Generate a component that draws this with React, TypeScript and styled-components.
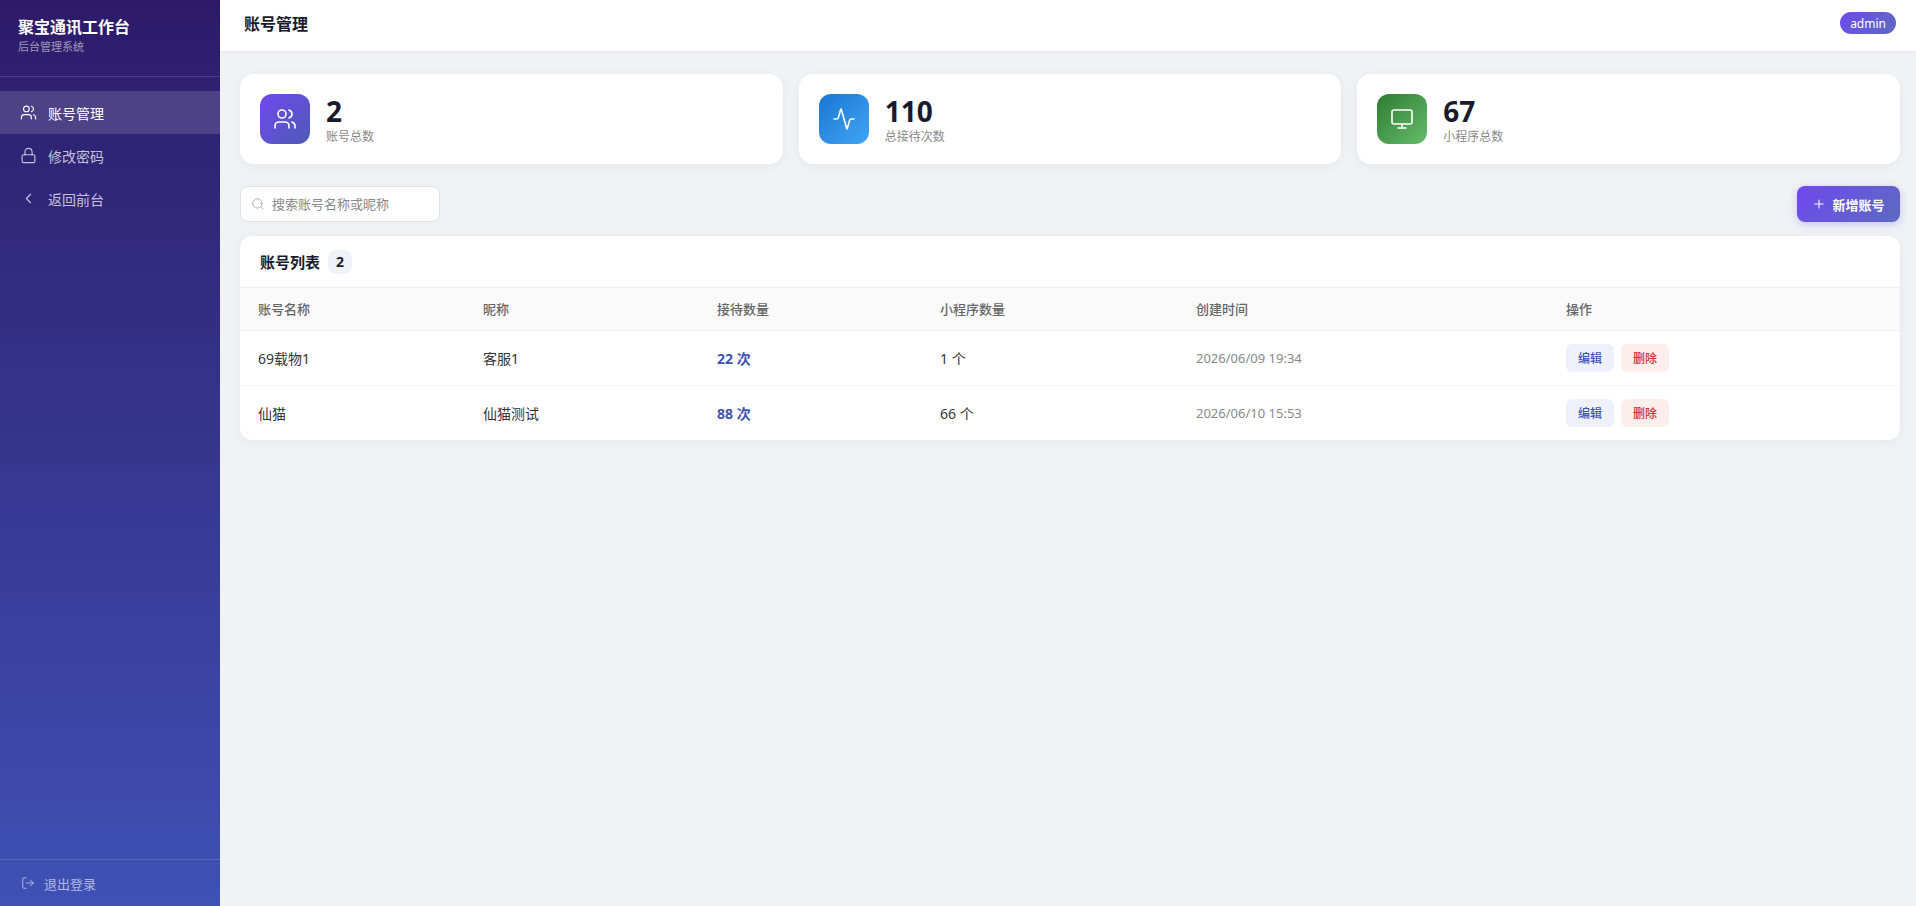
import React from 'react';
import styled, { createGlobalStyle } from 'styled-components';
import { Activity, ChevronLeft, Lock, LogOut, Monitor, Plus, Search, Users } from 'lucide-react';

const GlobalStyle = createGlobalStyle`
  html, body {
    margin: 0;
    padding: 0;
    background: #f0f2f5;
    font-family: "Noto Sans", "Noto Sans CJK SC", sans-serif;
    color: #1a1a2e;
  }
  * { box-sizing: border-box; }
`;

const Layout = styled.div`
  display: flex;
  height: 906px;
  overflow: hidden;
`;

const Sidebar = styled.aside`
  width: 220px;
  flex-shrink: 0;
  display: flex;
  flex-direction: column;
  background: linear-gradient(180deg, #2d1b69 0%, #3f51b5 100%);
`;

const Brand = styled.div`
  height: 77px;
  padding: 17px 18px 0;
  border-bottom: 1px solid rgba(255, 255, 255, 0.12);
`;

const BrandTitle = styled.div`
  font-size: 16px;
  line-height: 20px;
  font-weight: 700;
  color: #fff;
`;

const BrandSub = styled.div`
  font-size: 11px;
  line-height: 16px;
  margin-top: 2px;
  color: rgba(255, 255, 255, 0.55);
`;

const Menu = styled.nav`
  flex: 1;
  padding-top: 14px;
`;

const MenuItem = styled.a<{ $active?: boolean }>`
  display: flex;
  align-items: center;
  gap: 11px;
  height: 43px;
  padding-left: 20px;
  font-size: 14px;
  color: ${({ $active }) => ($active ? '#fff' : 'rgba(255, 255, 255, 0.72)')};
  background: ${({ $active }) => ($active ? 'rgba(255, 255, 255, 0.15)' : 'transparent')};
  cursor: pointer;
`;

const SidebarFooter = styled.div`
  height: 47px;
  padding-left: 21px;
  display: flex;
  align-items: center;
  gap: 9px;
  font-size: 13px;
  color: rgba(255, 255, 255, 0.6);
  border-top: 1px solid rgba(255, 255, 255, 0.15);
`;

const Main = styled.div`
  flex: 1;
  min-width: 0;
  display: flex;
  flex-direction: column;
`;

const Header = styled.header`
  height: 51px;
  padding: 0 20px 0 24px;
  display: flex;
  justify-content: space-between;
  align-items: center;
  background: #fff;
  box-shadow: 0 1px 4px rgba(0, 0, 0, 0.05);
`;

const PageTitle = styled.h1`
  margin: 0 0 4px;
  font-size: 16px;
  line-height: 22px;
  font-weight: 600;
  color: #1a1a2e;
`;

const UserBadge = styled.span`
  height: 22px;
  margin-bottom: 5px;
  padding: 0 10px;
  display: flex;
  align-items: center;
  font-size: 12px;
  color: #fff;
  border-radius: 11px;
  background: linear-gradient(135deg, #7048f0, #5c6bc0);
`;

const Content = styled.main`
  padding: 23px 16px 0 20px;
`;

const StatRow = styled.section`
  display: grid;
  grid-template-columns: repeat(3, 1fr);
  gap: 16px;
`;

const StatCard = styled.div`
  height: 90px;
  padding: 20px;
  display: flex;
  align-items: center;
  gap: 16px;
  background: #fff;
  border-radius: 14px;
  box-shadow: 0 2px 12px rgba(0, 0, 0, 0.05);
`;

const StatIcon = styled.div<{ $from: string; $to: string }>`
  width: 50px;
  height: 50px;
  flex-shrink: 0;
  display: flex;
  align-items: center;
  justify-content: center;
  color: #fff;
  border-radius: 12px;
  background: linear-gradient(135deg, ${({ $from }) => $from}, ${({ $to }) => $to});
`;

const StatNumber = styled.div`
  font-size: 28px;
  line-height: 34px;
  font-weight: 700;
  color: #1a1a2e;
`;

const StatLabel = styled.div`
  font-size: 12px;
  line-height: 16px;
  margin-top: 1px;
  color: #888;
`;

const Toolbar = styled.div`
  margin: 22px 0 14px;
  display: flex;
  justify-content: space-between;
  align-items: center;
`;

const SearchBox = styled.label`
  width: 200px;
  height: 36px;
  padding: 0 10px;
  display: flex;
  align-items: center;
  gap: 7px;
  color: #aaa;
  background: #fff;
  border: 1px solid #e0e0e0;
  border-radius: 8px;
`;

const SearchInput = styled.input`
  flex: 1;
  min-width: 0;
  padding: 0;
  border: none;
  outline: none;
  background: transparent;
  font: inherit;
  font-size: 13px;

  &::placeholder {
    color: #888;
    opacity: 1;
  }
`;

const AddButton = styled.button`
  width: 103px;
  height: 36px;
  padding: 0;
  display: flex;
  align-items: center;
  justify-content: center;
  gap: 6px;
  font: inherit;
  font-size: 13px;
  font-weight: 600;
  color: #fff;
  border: none;
  border-radius: 8px;
  background: linear-gradient(135deg, #7048f0, #5c6bc0);
  box-shadow: 0 2px 8px rgba(108, 78, 240, 0.3);
  cursor: pointer;
`;

const TableCard = styled.section`
  background: #fff;
  border-radius: 12px;
  box-shadow: 0 2px 12px rgba(0, 0, 0, 0.05);
  overflow: hidden;
`;

const TableHead = styled.div`
  height: 52px;
  padding: 0 20px;
  display: flex;
  align-items: center;
  gap: 8px;
  border-bottom: 1px solid #f0f0f0;
`;

const TableTitle = styled.h2`
  margin: 0;
  font-size: 15px;
  line-height: 20px;
  font-weight: 600;
  color: #1a1a2e;
`;

const CountBadge = styled.span`
  width: 24px;
  height: 24px;
  display: flex;
  align-items: center;
  justify-content: center;
  font-size: 14px;
  font-weight: 700;
  color: #1a1a2e;
  background: #f0f2fa;
  border-radius: 8px;
`;

const Table = styled.table`
  width: 100%;
  border-collapse: collapse;
  table-layout: fixed;
`;

const Th = styled.th<{ $width?: number }>`
  width: ${({ $width }) => ($width ? `${$width}px` : 'auto')};
  height: 42px;
  padding: 0 18px;
  text-align: left;
  font-size: 13px;
  font-weight: 500;
  color: #666;
  background: #fafafa;
  border-bottom: 1px solid #f0f0f0;
`;

const Td = styled.td`
  height: 55px;
  padding: 0 18px;
  font-size: 14px;
  color: #333;
  border-bottom: 1px solid #f5f5f5;

  tr:last-child > & {
    border-bottom: none;
  }
`;

const CountValue = styled.span`
  font-weight: 700;
  color: #3f51b5;
`;

const DateText = styled.span`
  font-size: 13px;
  color: #888;
`;

const Actions = styled.div`
  display: flex;
  gap: 7px;
`;

const ActionButton = styled.button<{ $danger?: boolean }>`
  width: 48px;
  height: 28px;
  padding: 0;
  font: inherit;
  font-size: 12px;
  font-weight: 500;
  color: ${({ $danger }) => ($danger ? '#d32f2f' : '#3f51b5')};
  background: ${({ $danger }) => ($danger ? '#fdeeee' : '#eef0fb')};
  border: none;
  border-radius: 6px;
  cursor: pointer;
`;

const stats = [
  { value: 2, label: '账号总数', icon: Users, from: '#7048f0', to: '#4f5bb5' },
  { value: 110, label: '总接待次数', icon: Activity, from: '#1976d2', to: '#42a5f5' },
  { value: 67, label: '小程序总数', icon: Monitor, from: '#2e7d32', to: '#66bb6a' },
];

const accounts = [
  { name: '69载物1', nick: '客服1', visits: 22, apps: 1, created: '2026/06/09 19:34' },
  { name: '仙猫', nick: '仙猫测试', visits: 88, apps: 66, created: '2026/06/10 15:53' },
];

const App: React.FC = () => {
  return (
    <Layout>
      <GlobalStyle />
      <Sidebar>
        <Brand>
          <BrandTitle>聚宝通讯工作台</BrandTitle>
          <BrandSub>后台管理系统</BrandSub>
        </Brand>
        <Menu>
          <MenuItem $active>
            <Users size={17} strokeWidth={1.6} />
            账号管理
          </MenuItem>
          <MenuItem>
            <Lock size={17} strokeWidth={1.6} />
            修改密码
          </MenuItem>
          <MenuItem>
            <ChevronLeft size={17} strokeWidth={1.6} />
            返回前台
          </MenuItem>
        </Menu>
        <SidebarFooter>
          <LogOut size={14} strokeWidth={1.6} />
          退出登录
        </SidebarFooter>
      </Sidebar>
      <Main>
        <Header>
          <PageTitle>账号管理</PageTitle>
          <UserBadge>admin</UserBadge>
        </Header>
        <Content>
          <StatRow>
            {stats.map(({ value, label, icon: Icon, from, to }) => (
              <StatCard key={label}>
                <StatIcon $from={from} $to={to}>
                  <Icon size={24} strokeWidth={1.6} />
                </StatIcon>
                <div>
                  <StatNumber>{value}</StatNumber>
                  <StatLabel>{label}</StatLabel>
                </div>
              </StatCard>
            ))}
          </StatRow>
          <Toolbar>
            <SearchBox>
              <Search size={14} strokeWidth={1.6} />
              <SearchInput placeholder="搜索账号名称或昵称" />
            </SearchBox>
            <AddButton>
              <Plus size={14} strokeWidth={1.8} />
              新增账号
            </AddButton>
          </Toolbar>
          <TableCard>
            <TableHead>
              <TableTitle>账号列表</TableTitle>
              <CountBadge>{accounts.length}</CountBadge>
            </TableHead>
            <Table>
              <thead>
                <tr>
                  <Th $width={225}>账号名称</Th>
                  <Th $width={234}>昵称</Th>
                  <Th $width={223}>接待数量</Th>
                  <Th $width={256}>小程序数量</Th>
                  <Th $width={370}>创建时间</Th>
                  <Th>操作</Th>
                </tr>
              </thead>
              <tbody>
                {accounts.map((a) => (
                  <tr key={a.name}>
                    <Td>{a.name}</Td>
                    <Td>{a.nick}</Td>
                    <Td>
                      <CountValue>{a.visits} 次</CountValue>
                    </Td>
                    <Td>{a.apps} 个</Td>
                    <Td>
                      <DateText>{a.created}</DateText>
                    </Td>
                    <Td>
                      <Actions>
                        <ActionButton>编辑</ActionButton>
                        <ActionButton $danger>删除</ActionButton>
                      </Actions>
                    </Td>
                  </tr>
                ))}
              </tbody>
            </Table>
          </TableCard>
        </Content>
      </Main>
    </Layout>
  );
};

export default App;
